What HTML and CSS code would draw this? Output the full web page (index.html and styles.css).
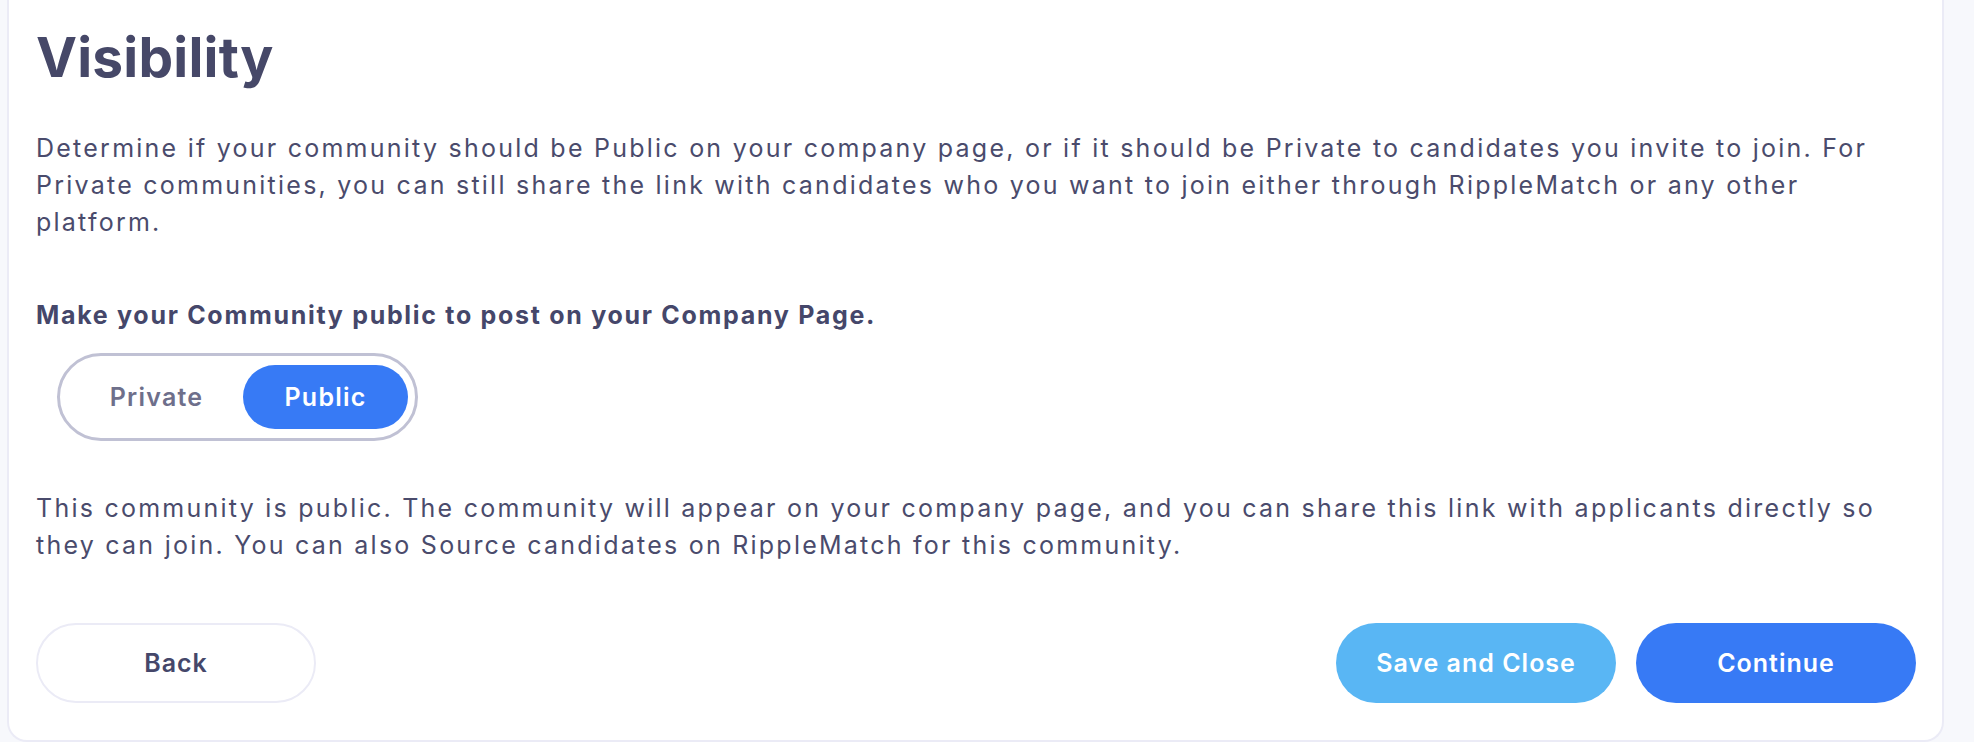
FILE: index.html
```html
<!DOCTYPE html>
<html lang="en">
<head>
<meta charset="utf-8">
<title>Visibility</title>
<link rel="stylesheet" href="styles.css">
</head>
<body>
<div class="page">
  <section class="card">
    <h1 class="title">Visibility</h1>
    <p class="text intro">Determine if your community should be Public on your company page, or if it should be Private to candidates you invite to join. For Private communities, you can still share the link with candidates who you want to join either through RippleMatch or any other platform.</p>
    <p class="label">Make your Community public to post on your Company Page.</p>
    <div class="toggle" role="radiogroup">
      <button class="toggle-option">Private</button>
      <button class="toggle-option is-active">Public</button>
    </div>
    <p class="text status">This community is public. The community will appear on your company page, and you can share this link with applicants directly so they can join. You can also Source candidates on RippleMatch for this community.</p>
    <div class="actions">
      <button class="btn btn-back">Back</button>
      <div class="actions-right">
        <button class="btn btn-save">Save and Close</button>
        <button class="btn btn-continue">Continue</button>
      </div>
    </div>
  </section>
</div>
</body>
</html>
```

FILE: styles.css
```css
* { box-sizing: border-box; }

html, body {
  margin: 0;
  padding: 0;
  background: #f7f8fc;
  height: 100%;
  overflow: hidden;
}

body {
  font-family: "Inter", "Open Sans", sans-serif;
  color: #45476a;
}

.page {
  padding: 0 30px 0 7px;
  height: 742px;
}

.card {
  background: #ffffff;
  border: 2px solid #ebebf6;
  border-top: 0;
  border-radius: 0 0 20px 20px;
  height: 742px;
  padding: 30px 26px 0 27px;
  display: flex;
  flex-direction: column;
  align-items: flex-start;
}

.title {
  margin: 0;
  font-size: 55px;
  line-height: 55px;
  font-weight: 700;
  color: #464868;
  letter-spacing: 0.2px;
}

.text {
  margin: 0;
  font-family: "Inter", "Open Sans", sans-serif;
  font-size: 25px;
  line-height: 37px;
  font-weight: 400;
  letter-spacing: 2.24px;
  color: #4a4b6c;
}

.intro {
  margin-top: 45px;
}

.label {
  margin: 56px 0 0;
  font-size: 25px;
  line-height: 37px;
  font-weight: 700;
  letter-spacing: 1.7px;
  color: #45476a;
}

.toggle {
  margin: 19px 0 0 21px;
  display: flex;
  gap: 4px;
  padding: 9px 7px 9px 14px;
  border: 3px solid #c0c1d4;
  border-radius: 999px;
  background: #fff;
}

.toggle-option {
  width: 165px;
  height: 64px;
  border: 0;
  border-radius: 999px;
  background: transparent;
  font-family: inherit;
  font-size: 25px;
  font-weight: 600;
  letter-spacing: 1.2px;
  color: #6e6f8b;
  cursor: pointer;
}

.toggle-option.is-active {
  background: #377af5;
  color: #ffffff;
}

.status {
  margin-top: 49px;
}

.actions {
  margin-top: 59px;
  width: 100%;
  display: flex;
  justify-content: space-between;
  align-items: center;
}

.actions-right {
  display: flex;
  gap: 20px;
}

.btn {
  width: 280px;
  height: 80px;
  border-radius: 40px;
  border: 0;
  font-family: inherit;
  font-size: 25px;
  font-weight: 600;
  letter-spacing: 1px;
  cursor: pointer;
}

.btn-back {
  background: #fff;
  border: 2px solid #ebebf6;
  color: #45476a;
}

.btn-save {
  background: #59b6f4;
  color: #fff;
}

.btn-continue {
  background: #377af5;
  color: #fff;
}
```
